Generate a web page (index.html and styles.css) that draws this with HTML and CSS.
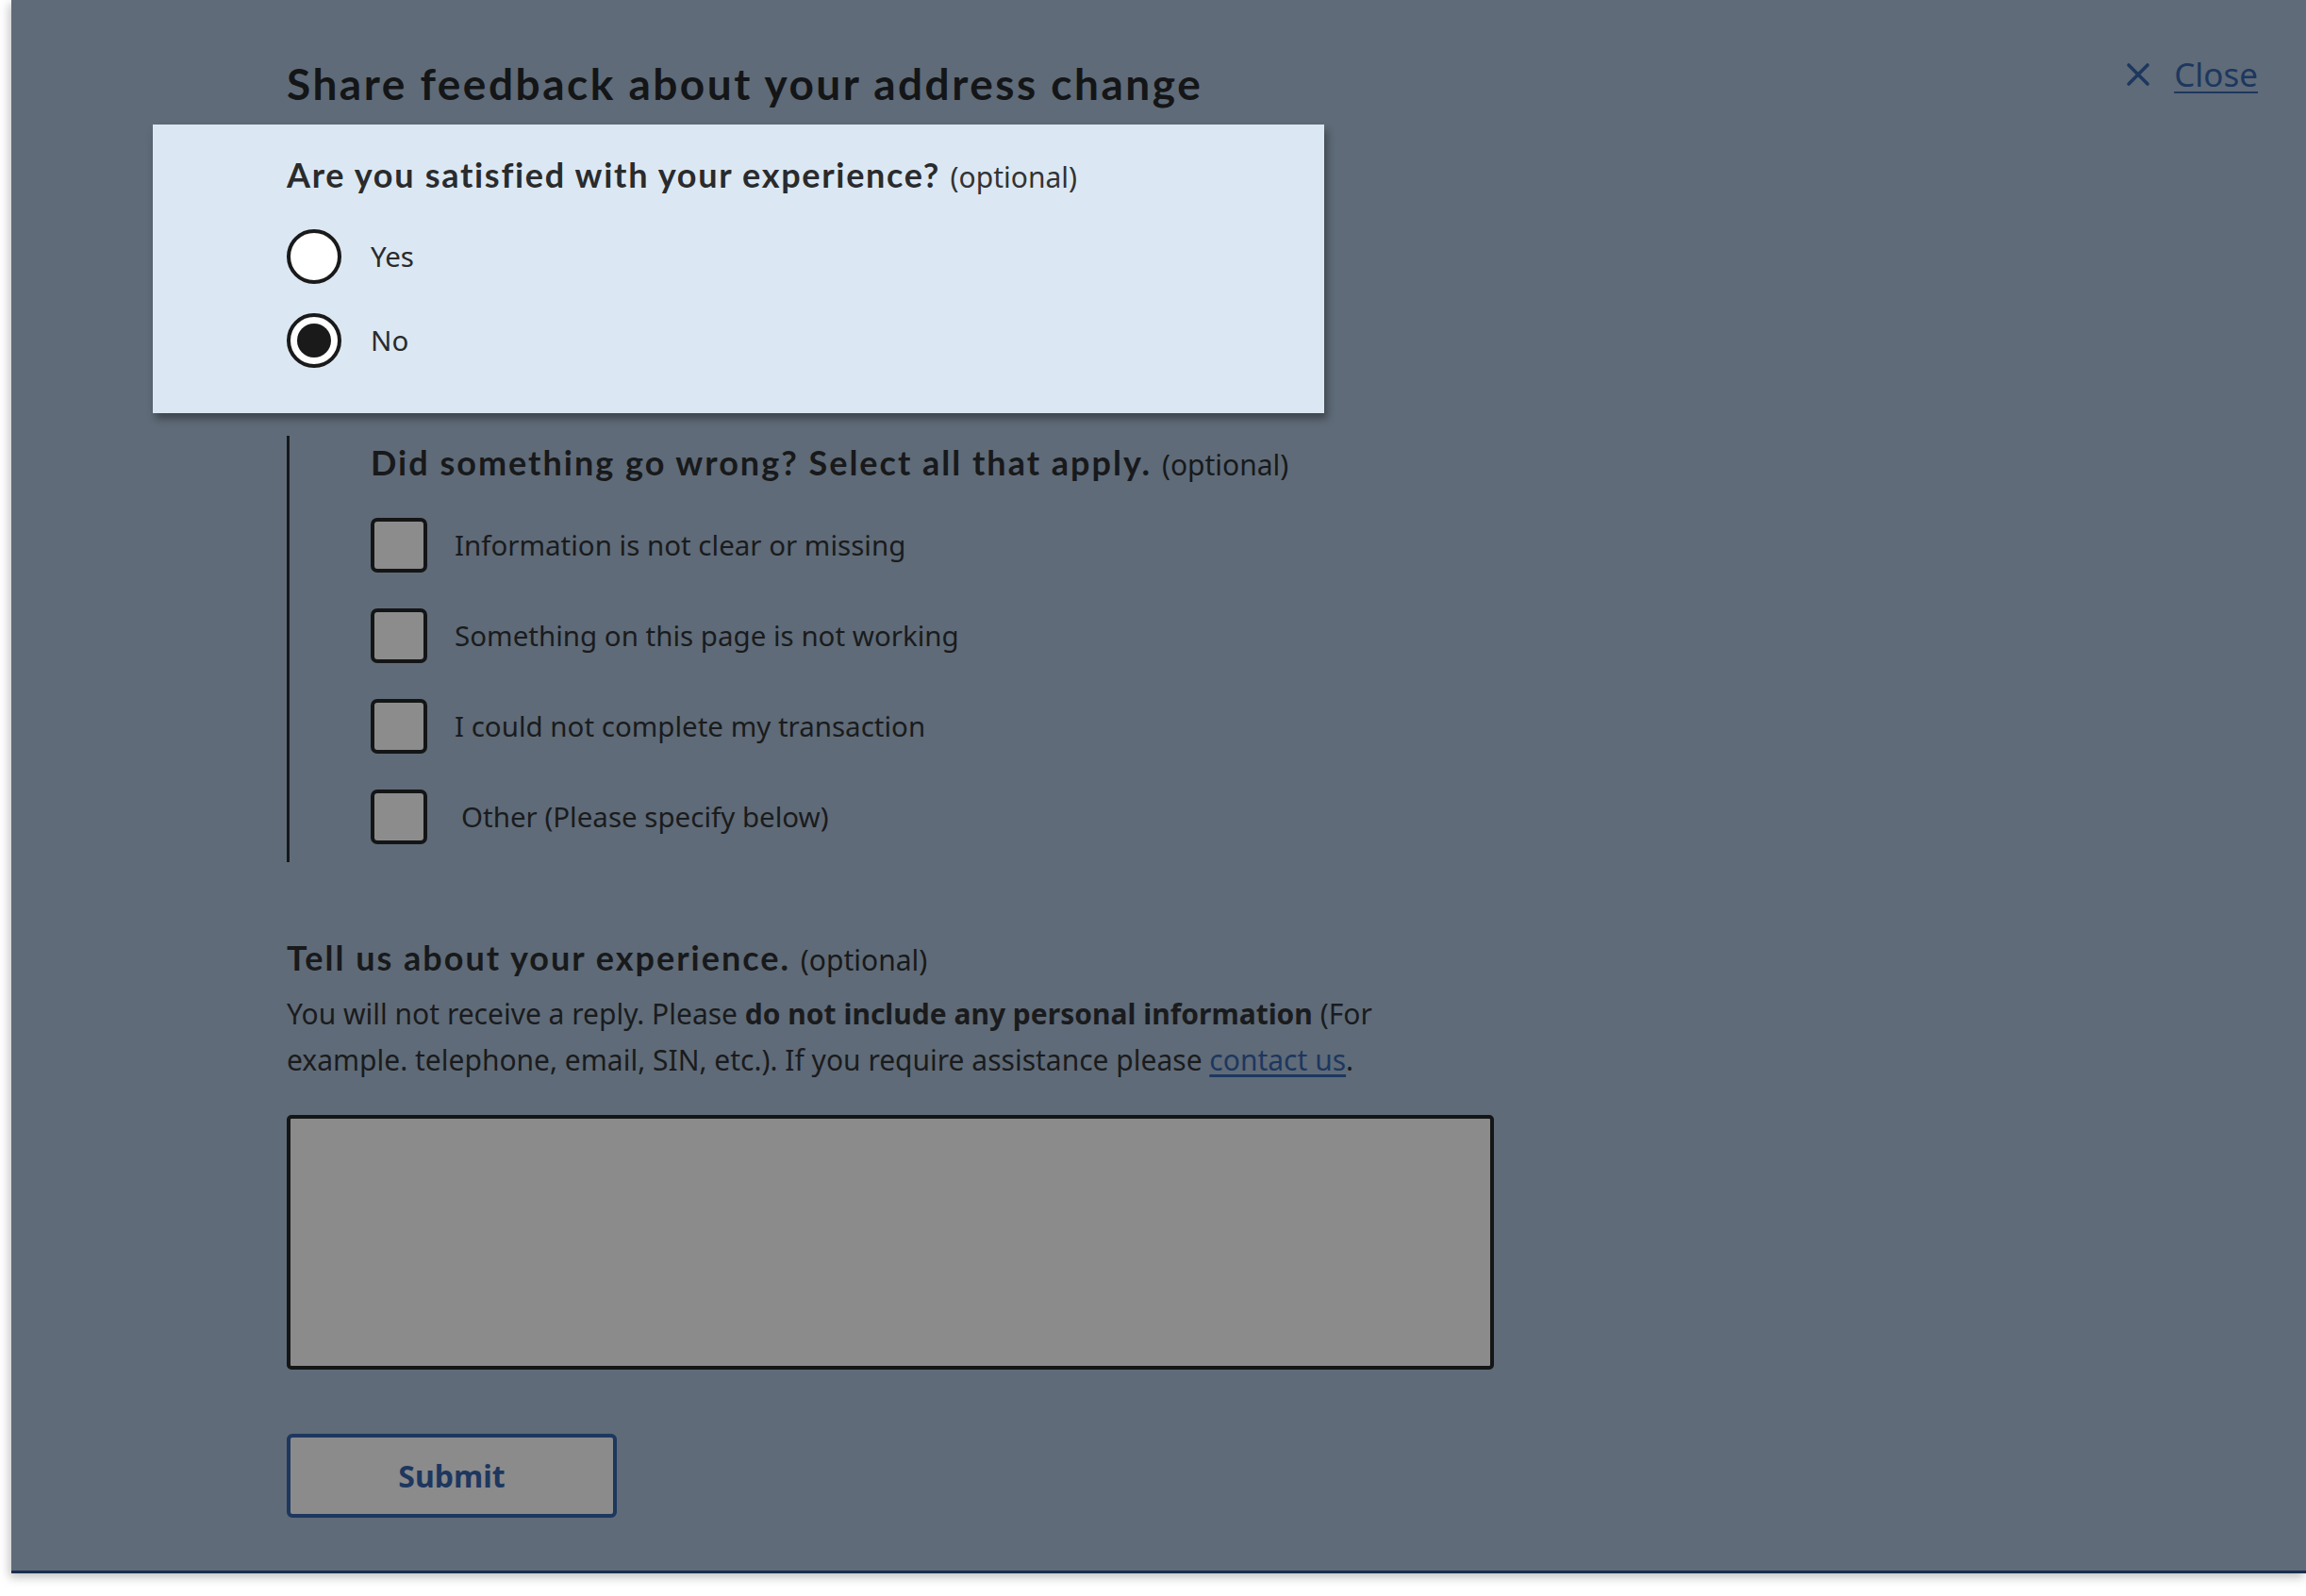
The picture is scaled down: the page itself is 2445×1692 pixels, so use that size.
FILE: index.html
```html
<!DOCTYPE html>
<html lang="en">
<head>
<meta charset="utf-8">
<title>Share feedback about your address change</title>
<link rel="stylesheet" href="styles.css">
</head>
<body>
<div class="panel">
  <div class="content">
    <header class="header">
      <h2 class="title">Share feedback about your address change</h2>
      <a class="close" href="#">
        <svg class="close-icon" viewBox="0 0 26 26" width="26" height="26" aria-hidden="true">
          <path d="M3 3 L23 23 M23 3 L3 23" stroke="#1d375f" stroke-width="3.6" stroke-linecap="round" fill="none"/>
        </svg>
        <span class="close-text">Close</span>
      </a>
    </header>

    <fieldset class="highlight">
      <legend class="q q1">Are you satisfied with your experience? <span class="opt">(optional)</span></legend>
      <div class="radios">
        <label class="radio-row"><span class="radio"></span><span class="lbl">Yes</span></label>
        <label class="radio-row"><span class="radio checked"><span class="dot"></span></span><span class="lbl">No</span></label>
      </div>
    </fieldset>

    <fieldset class="wrong">
      <div class="q">Did something go wrong? Select all that apply. <span class="opt">(optional)</span></div>
      <div class="checks">
        <label class="check-row"><span class="box"></span><span class="lbl">Information is not clear or missing</span></label>
        <label class="check-row"><span class="box"></span><span class="lbl">Something on this page is not working</span></label>
        <label class="check-row"><span class="box"></span><span class="lbl">I could not complete my transaction</span></label>
        <label class="check-row"><span class="box"></span><span class="lbl other">Other (Please specify below)</span></label>
      </div>
    </fieldset>

    <div class="tell">
      <div class="q">Tell us about your experience. <span class="opt">(optional)</span></div>
      <p class="para">You will not receive a reply. Please <strong>do not include any personal information</strong> (For example. telephone, email, SIN, etc.). If you require assistance please <a class="link" href="#">contact us</a>.</p>
      <div class="textarea"></div>
      <button class="submit" type="button">Submit</button>
    </div>
  </div>
</div>
</body>
</html>
```

FILE: styles.css
```css
* { box-sizing: border-box; }

html, body {
  margin: 0;
  padding: 0;
  background: #ffffff;
}

body {
  font-family: "Noto Sans", "Open Sans", sans-serif;
  color: #1b1c1e;
  width: 2445px;
  height: 1692px;
  overflow: hidden;
}

.panel {
  margin-left: 12px;
  height: 1668px;
  background: #5f6b78;
  border-bottom: 3px solid #1b2f4e;
  box-shadow: -2px 4px 10px rgba(0, 0, 0, 0.25);
  padding: 61px 50px 0 292px;
}

.content {
  display: flex;
  flex-direction: column;
}

.header {
  display: flex;
  justify-content: space-between;
  align-items: flex-start;
  height: 55px;
}

.title {
  margin: 0;
  font-family: Lato, "Noto Sans", sans-serif;
  font-weight: 700;
  font-size: 46px;
  letter-spacing: 2.5px;
  line-height: 55px;
  color: #141517;
}

.close {
  display: flex;
  align-items: center;
  gap: 25px;
  margin-top: -4px;
  margin-right: 1px;
  text-decoration: none;
  color: #1d375f;
}

.close-icon { display: block; }

.close-text {
  font-family: "Noto Sans", sans-serif;
  font-size: 35px;
  line-height: 44px;
  text-decoration: underline;
  text-decoration-thickness: 2px;
  text-underline-offset: 5px;
}

.q {
  font-family: Lato, "Noto Sans", sans-serif;
  font-weight: 700;
  font-size: 36px;
  letter-spacing: 2px;
  line-height: 44px;
  color: #18191b;
  padding: 0;
}

.q1 { letter-spacing: 1.7px; }

.opt {
  font-family: "Noto Sans", sans-serif;
  font-weight: 400;
  font-size: 30px;
  letter-spacing: 0;
}

.highlight {
  margin: 16px 0 0 -142px;
  width: 1242px;
  height: 306px;
  border: 0;
  background: #dbe8f3;
  padding: 31px 0 0 142px;
  box-shadow: 3px 6px 8px rgba(0, 0, 0, 0.35);
  position: relative;
}

.highlight legend.q {
  float: left;
  width: 100%;
  color: #2a2b2d;
}

.highlight .opt { color: #333; }

.radios {
  clear: both;
  display: flex;
  flex-direction: column;
  gap: 31px;
  padding-top: 33px;
}

.radio-row {
  display: flex;
  align-items: center;
  gap: 31px;
  height: 58px;
}

.radio {
  width: 58px;
  height: 58px;
  border: 4px solid #1a1a1a;
  border-radius: 50%;
  background: #ffffff;
  display: flex;
  align-items: center;
  justify-content: center;
}

.dot {
  width: 36px;
  height: 36px;
  border-radius: 50%;
  background: #1a1a1a;
}

.lbl {
  font-size: 29.5px;
  line-height: 40px;
  color: #2a2b2d;
}

.wrong {
  margin: 24px 0 0 0;
  border: 0;
  border-left: 3px solid #16181b;
  padding: 6px 0 19px 86px;
  min-width: 0;
}

.checks {
  display: flex;
  flex-direction: column;
  gap: 38px;
  padding-top: 34px;
}

.check-row {
  display: flex;
  align-items: center;
  gap: 29px;
  height: 58px;
}

.box {
  width: 60px;
  height: 58px;
  border: 4px solid #141516;
  border-radius: 7px;
  background: #8c8c8c;
  flex: none;
}

.check-row .lbl { color: #1a1b1d; }

.other { padding-left: 7px; }

.tell {
  margin-top: 79px;
  display: flex;
  flex-direction: column;
  align-items: flex-start;
}

.para {
  margin: 10px 0 0 0;
  max-width: 1190px;
  font-size: 30px;
  line-height: 49px;
  color: #1a1b1d;
}

.para strong { font-weight: 700; }

.link {
  color: #1d375f;
  text-decoration: underline;
  text-underline-offset: 4px;
}

.textarea {
  margin-top: 34px;
  width: 1280px;
  height: 270px;
  border: 4px solid #141516;
  border-radius: 5px;
  background: #8b8b8b;
}

.submit {
  margin-top: 68px;
  width: 350px;
  height: 89px;
  border: 4px solid #1d375f;
  border-radius: 6px;
  background: #8b8b8b;
  color: #1d375f;
  font-family: "Noto Sans", sans-serif;
  font-weight: 700;
  font-size: 32px;
  padding: 0;
}
```
